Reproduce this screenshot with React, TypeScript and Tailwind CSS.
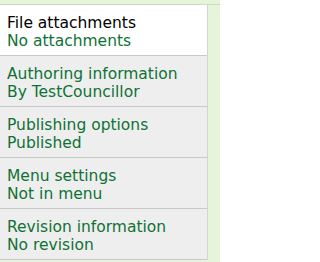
const tabs = [
  { title: "File attachments", summary: "No attachments", selected: true },
  { title: "Authoring information", summary: "By TestCouncillor" },
  { title: "Publishing options", summary: "Published" },
  { title: "Menu settings", summary: "Not in menu" },
  { title: "Revision information", summary: "No revision" },
];

export default function App() {
  return (
    <div className="h-[262px] w-[220px] overflow-hidden bg-[#e6f4d9] pt-[4px] font-['DejaVu_Sans',Verdana,sans-serif] text-[15.5px] leading-[18px]">
      <div className="border-t border-[#cfd8c8]">
        <ul className="w-[208px] border-r border-[#d4d4d4]">
          {tabs.map((tab) => (
            <li
              key={tab.title}
              className={`border-b border-[#c8c8c8] px-[7px] pt-[9px] pb-[5px] ${
                tab.selected ? "bg-white" : "bg-[#eeeeee]"
              }`}
            >
              <a href="#" className="block">
                <div className={tab.selected ? "text-black" : "text-[#0e7236]"}>{tab.title}</div>
                <div className="text-[#0e7236]">{tab.summary}</div>
              </a>
            </li>
          ))}
        </ul>
      </div>
    </div>
  );
}
